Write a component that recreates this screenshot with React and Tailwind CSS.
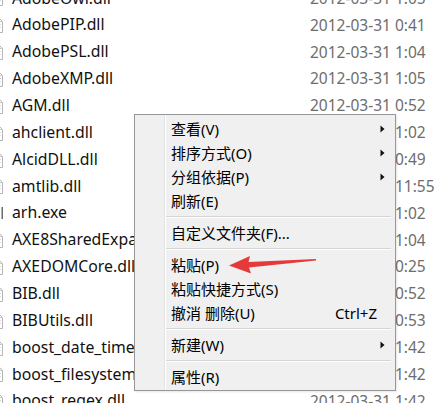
import React from "react";

const files = [
  ["AdobeOwl.dll", "2012-03-31 1:05"],
  ["AdobePIP.dll", "2012-03-31 0:41"],
  ["AdobePSL.dll", "2012-03-31 1:04"],
  ["AdobeXMP.dll", "2012-03-31 1:05"],
  ["AGM.dll", "2012-03-31 0:52"],
  ["ahclient.dll", "2012-03-31 1:02"],
  ["AlcidDLL.dll", "2012-03-31 0:49"],
  ["amtlib.dll", "2012-03-31 11:55"],
  ["arh.exe", "2012-03-31 1:02", "exe"],
  ["AXE8SharedExpat.dll", "2012-03-31 1:04"],
  ["AXEDOMCore.dll", "2012-03-31 0:25"],
  ["BIB.dll", "2012-03-31 0:52"],
  ["BIBUtils.dll", "2012-03-31 0:53"],
  ["boost_date_time.dll", "2012-03-31 1:42"],
  ["boost_filesystem.dll", "2012-03-31 1:42"],
  ["boost_regex.dll", "2012-03-31 1:42"],
];

const font = { fontFamily: '"Noto Sans", "Noto Sans CJK SC", sans-serif' };

function FileIcon({ exe }) {
  if (exe) {
    return (
      <svg width="16" height="18" viewBox="0 0 16 18" className="shrink-0 -ml-[12px]">
        <rect x="13.5" y="3" width="1.5" height="12" fill="#6b6b6b" />
      </svg>
    );
  }
  return (
    <svg width="16" height="18" viewBox="0 0 16 18" className="shrink-0 -ml-[12px]">
      <path d="M1.5 1.5 H10.5 L14.5 5.5 V16.5 H1.5 Z" fill="#fff" stroke="#b5b5b5" strokeWidth="1" />
      <path d="M10.5 1.5 V5.5 H14.5" fill="none" stroke="#c8c8c8" strokeWidth="1" />
      <rect x="4" y="8" width="9" height="1" fill="#d9d9d9" />
      <rect x="4" y="11" width="9" height="1" fill="#d9d9d9" />
    </svg>
  );
}

function Arrow() {
  return (
    <svg width="5" height="8" viewBox="0 0 5 8" className="ml-auto mr-[10px]">
      <path d="M0.5 0.5 L4.5 4 L0.5 7.5 Z" fill="#111" />
    </svg>
  );
}

function Item({ label, shortcut, sub }) {
  return (
    <div className="flex items-center h-[24px] pl-[5px] text-[15px] text-black whitespace-nowrap">
      <span>{label}</span>
      {shortcut && <span className="ml-auto mr-[18px]">{shortcut}</span>}
      {sub && <Arrow />}
    </div>
  );
}

function Sep() {
  return (
    <div className="h-[8px] flex flex-col justify-center pr-[4px]">
      <div className="border-t border-[#d5d5d5]" />
      <div className="border-t border-white" />
    </div>
  );
}

export default function App() {
  return (
    <div className="relative w-[444px] h-[403px] overflow-hidden bg-white" style={font}>
      <div className="-mt-[15px]">
        {files.map(([name, date, kind]) => (
          <div key={name} className="flex items-center h-[26.86px] text-[15.8px]">
            <div className="w-[310px] shrink-0 flex items-center gap-[8px] overflow-hidden whitespace-nowrap text-[#111]">
              <FileIcon exe={kind === "exe"} />
              <span>{name}</span>
            </div>
            <span className="text-[#6d6d6d] whitespace-nowrap text-[15.5px]">{date}</span>
          </div>
        ))}
      </div>

      <div className="absolute left-[134px] top-[114px] w-[262px] h-[277px] bg-[#f0f0f0] border border-[#979797] shadow-[1px_1px_2px_rgba(0,0,0,0.1)] flex">
        <div className="w-[30px] shrink-0 border-r border-[#e2e3e3]" />
        <div className="flex-1 border-l border-white pt-[2px] pb-[1px]">
          <Item label="查看(V)" sub />
          <Item label="排序方式(O)" sub />
          <Item label="分组依据(P)" sub />
          <Item label="刷新(E)" />
          <Sep />
          <Item label="自定义文件夹(F)..." />
          <Sep />
          <Item label="粘贴(P)" />
          <Item label="粘贴快捷方式(S)" />
          <Item label="撤消 删除(U)" shortcut="Ctrl+Z" />
          <Sep />
          <Item label="新建(W)" sub />
          <Sep />
          <Item label="属性(R)" />
        </div>
      </div>

      <svg className="absolute left-[226px] top-[252px]" width="95" height="22" viewBox="0 0 95 22">
        <path d="M3 13.5 L24 4 L22.5 10 L90 7 L90 8.5 L23 15.5 L25 21.5 Z" fill="#e53a3a" />
      </svg>
    </div>
  );
}
